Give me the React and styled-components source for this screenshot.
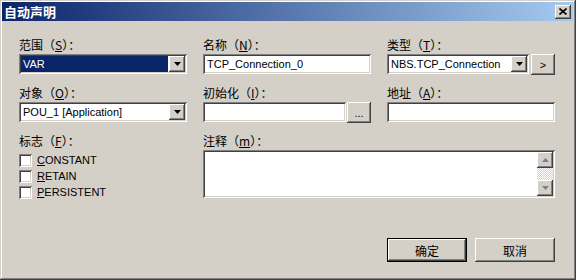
import React from "react"
import styled, {createGlobalStyle, css} from "styled-components"

const GlobalStyle = createGlobalStyle`
  html, body {
    margin: 0;
    padding: 0;
    background: #d4d0c8;
  }
  body {
    width: 576px;
    height: 280px;
    overflow: hidden;
  }
`

const raised = css`
  background: #d4d0c8;
  box-shadow: inset -1px -1px #404040, inset 1px 1px #fff, inset -2px -2px #808080, inset 2px 2px #d4d0c8;
`
const sunken = css`
  box-shadow: inset 1px 1px #808080, inset -1px -1px #fff, inset 2px 2px #404040, inset -2px -2px #d4d0c8;
`
const cjk = `"Noto Sans CJK SC", "Noto Sans", sans-serif`
const latin = `"Liberation Sans", "Noto Sans CJK SC", sans-serif`

const Window = styled.div`
  box-sizing: border-box;
  width: 576px;
  height: 280px;
  padding: 2px 3px 3px 2px;
  background: #d4d0c8;
  box-shadow: inset -1px -1px #404040, inset 1px 1px #d4d0c8, inset -2px -2px #808080, inset 2px 2px #fff;
  display: flex;
  flex-direction: column;
`
const TitleBar = styled.div`
  height: 19px;
  display: flex;
  align-items: center;
  justify-content: space-between;
  padding: 0 2px 0 2px;
  background: linear-gradient(to right, #0a246a, #a6caf0);

  > span {
    font-family: ${cjk};
    font-weight: bold;
    font-size: 13px;
    line-height: 19px;
    color: #fff;
  }
`
const CloseButton = styled.div`
  ${raised};
  width: 16px;
  height: 14px;
  display: flex;
  align-items: center;
  justify-content: center;
`
const Body = styled.div`
  padding: 16px 18px 0 17px;
`
const Grid = styled.div`
  display: grid;
  grid-template-columns: repeat(3, 168px);
  grid-template-rows: 48px 48px 67px;
  column-gap: 16px;
`
const Field = styled.div`
  display: flex;
  flex-direction: column;
  grid-column: ${p => p.$span ? `span ${p.$span}` : "auto"};
`
const Label = styled.div`
  font-family: ${cjk};
  font-size: 12px;
  line-height: 16px;
  height: 16px;
  color: #000;
  margin-bottom: ${p => p.$gap || 1}px;
  white-space: nowrap;
`
const Key = styled.span`
  text-decoration: underline;
  text-underline-offset: 1px;
`
const Row = styled.div`
  display: flex;
  gap: ${p => p.$gap || 0}px;
`
const Combo = styled.div`
  ${sunken};
  box-sizing: border-box;
  width: ${p => p.$w || 168}px;
  height: 20px;
  padding: 2px;
  display: flex;
  background: #fff;
`
const Value = styled.div`
  flex: 1;
  font-family: ${latin};
  font-size: 11px;
  line-height: 16px;
  padding-left: 2px;
  margin-right: 1px;
  color: ${p => p.$selected ? "#fff" : "#000"};
  background: ${p => p.$selected ? "#0a246a" : "#fff"};
  white-space: nowrap;
  overflow: hidden;
`
const ArrowButton = styled.div`
  ${raised};
  width: 16px;
  height: 16px;
  display: flex;
  align-items: center;
  justify-content: center;
`
const TextBox = styled.div`
  ${sunken};
  box-sizing: border-box;
  flex: 1;
  height: 20px;
  padding: 2px 4px;
  background: #fff;
  font-family: ${latin};
  font-size: 11px;
  line-height: 16px;
  color: #000;
`
const SmallButton = styled.div`
  ${raised};
  width: 24px;
  height: 21px;
  flex-shrink: 0;
  display: flex;
  align-items: center;
  justify-content: center;
  font-family: ${latin};
  font-size: 11px;
  color: #000;
`
const CheckRow = styled.div`
  display: flex;
  align-items: center;
  height: 16px;
  gap: 5px;
  font-family: ${latin};
  font-size: 11px;
  color: #000;
`
const Box = styled.div`
  ${sunken};
  width: 13px;
  height: 13px;
  background: #fff;
  box-sizing: border-box;
`
const Memo = styled.div`
  ${sunken};
  box-sizing: border-box;
  height: 48px;
  padding: 2px;
  display: flex;
  background: #fff;
`
const MemoText = styled.div`
  flex: 1;
`
const ScrollBar = styled.div`
  width: 16px;
  display: flex;
  flex-direction: column;
`
const Track = styled.div`
  flex: 1;
  background: repeating-conic-gradient(#fff 0 25%, #d4d0c8 0 50%) 0 0 / 2px 2px;
`
const Footer = styled.div`
  display: flex;
  justify-content: flex-end;
  gap: 8px;
  width: 536px;
  margin-top: 38px;
`
const DialogButton = styled.div`
  ${raised};
  box-sizing: border-box;
  width: 80px;
  height: 24px;
  display: flex;
  align-items: center;
  justify-content: center;
  font-family: ${cjk};
  font-size: 12px;
  color: #000;
  ${p => p.$default && css`
    border: 1px solid #000;
  `}
`

const DownArrow = ({color = "#000"}) => (
  <svg width="7" height="4" viewBox="0 0 7 4">
    <polygon points="0,0 7,0 3.5,4" fill={color}/>
  </svg>
)
const UpArrow = ({color = "#808080"}) => (
  <svg width="7" height="4" viewBox="0 0 7 4">
    <polygon points="3.5,0 7,4 0,4" fill={color}/>
  </svg>
)

function Check({k, rest}) {
  return (
    <CheckRow>
      <Box/>
      <span><Key>{k}</Key>{rest}</span>
    </CheckRow>
  )
}

function App() {
  return (
    <>
      <GlobalStyle/>
      <Window>
        <TitleBar>
          <span>自动声明</span>
          <CloseButton>
            <svg width="8" height="7" viewBox="0 0 8 7">
              <path d="M0.5 0.5 L7.5 6.5 M7.5 0.5 L0.5 6.5" stroke="#000" strokeWidth="1.6"/>
            </svg>
          </CloseButton>
        </TitleBar>
        <Body>
          <Grid>
            <Field>
              <Label>范围（<Key>S</Key>）：</Label>
              <Combo>
                <Value $selected>VAR</Value>
                <ArrowButton><DownArrow/></ArrowButton>
              </Combo>
            </Field>
            <Field>
              <Label>名称（<Key>N</Key>）：</Label>
              <Row><TextBox>TCP_Connection_0</TextBox></Row>
            </Field>
            <Field>
              <Label>类型（<Key>T</Key>）：</Label>
              <Row $gap={2}>
                <Combo $w={142}>
                  <Value>NBS.TCP_Connection</Value>
                  <ArrowButton><DownArrow/></ArrowButton>
                </Combo>
                <SmallButton>&gt;</SmallButton>
              </Row>
            </Field>

            <Field>
              <Label>对象（<Key>O</Key>）：</Label>
              <Combo>
                <Value>POU_1 [Application]</Value>
                <ArrowButton><DownArrow/></ArrowButton>
              </Combo>
            </Field>
            <Field>
              <Label>初始化（<Key>I</Key>）：</Label>
              <Row $gap={1}>
                <TextBox/>
                <SmallButton>...</SmallButton>
              </Row>
            </Field>
            <Field>
              <Label>地址（<Key>A</Key>）：</Label>
              <Row><TextBox/></Row>
            </Field>

            <Field>
              <Label $gap={3}>标志（<Key>F</Key>）：</Label>
              <Check k="C" rest="ONSTANT"/>
              <Check k="R" rest="ETAIN"/>
              <Check k="P" rest="ERSISTENT"/>
            </Field>
            <Field $span={2}>
              <Label>注释（<Key>m</Key>）：</Label>
              <Memo>
                <MemoText/>
                <ScrollBar>
                  <ArrowButton><UpArrow/></ArrowButton>
                  <Track/>
                  <ArrowButton><DownArrow color="#808080"/></ArrowButton>
                </ScrollBar>
              </Memo>
            </Field>
          </Grid>
          <Footer>
            <DialogButton $default>确定</DialogButton>
            <DialogButton>取消</DialogButton>
          </Footer>
        </Body>
      </Window>
    </>
  )
}

export default App
